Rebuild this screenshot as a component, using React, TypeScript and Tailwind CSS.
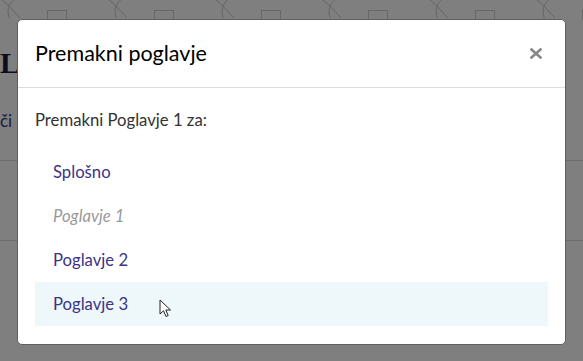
import * as React from "react";

type Target = {
  label: string;
  current?: boolean;
};

const targets: Target[] = [
  { label: "Splošno" },
  { label: "Poglavje 1", current: true },
  { label: "Poglavje 2" },
  { label: "Poglavje 3" },
];

function PatternStrip() {
  // faint decorative strip of the page behind the overlay
  const cols = [0, 1, 2, 3, 4, 5];
  return (
    <div className="flex h-[20px] overflow-hidden">
      {cols.map((i) => (
        <div key={i} className="flex w-[107px] shrink-0 items-start">
          <svg width="30" height="20" viewBox="0 0 30 20" className="mt-[-2px]">
            <path d="M2 2 C10 8 14 14 22 22" stroke="#c9c9c9" strokeWidth="1" fill="none" />
            <path d="M16 0 C8 6 6 12 10 22" stroke="#c9c9c9" strokeWidth="1" fill="none" />
          </svg>
          <div className="ml-[17px] mt-[10px] h-[12px] w-[20px] border border-[#d0d0d0]" />
        </div>
      ))}
    </div>
  );
}

function CloseIcon() {
  return (
    <svg width="12" height="11" viewBox="0 0 12 11">
      <path d="M1.5 1.5 L10.5 9.5 M10.5 1.5 L1.5 9.5" stroke="#888888" strokeWidth="2.6" strokeLinecap="square" />
    </svg>
  );
}

function Cursor() {
  return (
    <svg width="14" height="20" viewBox="0 0 14 20" className="absolute left-[159px] top-[299px]">
      <path
        d="M1 1 L1 15 L4.5 11.8 L7 17.5 L9.2 16.5 L6.8 11 L11.5 11 Z"
        fill="#ffffff"
        stroke="#222222"
        strokeWidth="1"
        strokeLinejoin="round"
      />
    </svg>
  );
}

export default function App() {
  const [hovered, setHovered] = React.useState(3);

  return (
    <div
      className="relative h-[361px] w-[583px] overflow-hidden bg-white"
      style={{ fontFamily: "Lato, 'Open Sans', sans-serif" }}
    >
      {/* page behind */}
      <PatternStrip />
      <div className="pt-[28px] text-[30px] leading-none font-bold text-[#1d1b3a]" style={{ fontFamily: "'Liberation Serif', serif" }}>
        Lu
      </div>
      <div className="mt-[30px] text-[17px] text-[#3b3486]">či</div>
      <div className="mt-[26px] border-t border-[#d8d8d8]" />
      <div className="mt-[79px] border-t border-[#d8d8d8]" />

      {/* overlay */}
      <div className="absolute inset-0 bg-black/50">
        <div className="ml-[17px] mt-[19px] w-[549px] overflow-hidden rounded-[5px] border border-[#5f5f5f] bg-white">
          <div className="flex h-[68px] items-center justify-between border-b border-[#dcdcdc] pl-[17px] pr-[19px]">
            <h2 className="text-[21.5px] text-black">Premakni poglavje</h2>
            <button className="flex h-[20px] w-[20px] items-center justify-center">
              <CloseIcon />
            </button>
          </div>
          <div className="px-[17px] pb-[18px] pt-[21px]">
            <p className="text-[16.7px] leading-[22px] text-[#333333]">Premakni Poglavje 1 za:</p>
            <ul className="mt-[19px]">
              {targets.map((t, i) => (
                <li
                  key={t.label}
                  onMouseEnter={() => !t.current && setHovered(i)}
                  className={`flex h-[44px] items-center pl-[18px] pt-[2px] text-[16.7px] ${
                    t.current ? "italic text-[#999999]" : "text-[#3b3486]"
                  } ${hovered === i ? "bg-[#eef7fa]" : ""}`}
                >
                  {t.label}
                </li>
              ))}
            </ul>
          </div>
        </div>
        <Cursor />
      </div>
    </div>
  );
}
